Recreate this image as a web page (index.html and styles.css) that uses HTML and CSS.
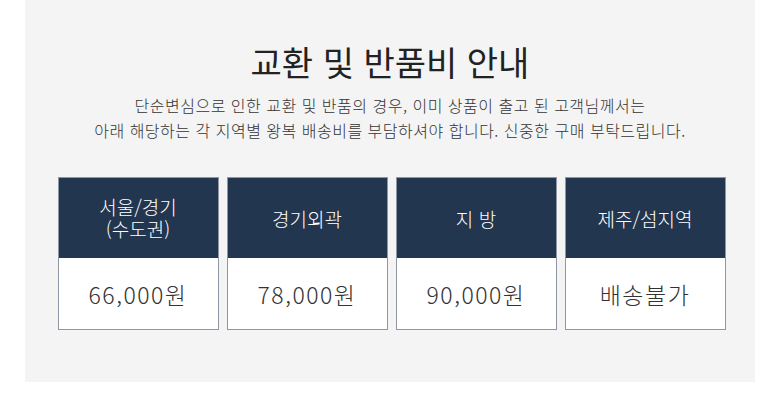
FILE: index.html
```html
<!DOCTYPE html>
<html lang="ko">
  <head>
    <meta charset="UTF-8" />
    <meta name="viewport" content="width=device-width, initial-scale=1.0" />
    <title>교환 및 반품비 안내</title>
    <link rel="stylesheet" href="styles.css">
  </head>
  <body>
    <div class="panel">
      <h1 class="title">교환 및 반품비 안내</h1>
      <p class="desc">
        단순변심으로 인한 교환 및 반품의 경우, 이미 상품이 출고 된 고객님께서는<br />
        아래 해당하는 각 지역별 왕복 배송비를 부담하셔야 합니다. 신중한 구매 부탁드립니다.
      </p>
      <div class="cards">
        <div class="card">
          <div class="cardHead">
            <span class="headLine">서울/경기</span>
            <span class="headLine">(수도권)</span>
          </div>
          <div class="cardBody">66,000원</div>
        </div>
        <div class="card">
          <div class="cardHead">경기외곽</div>
          <div class="cardBody">78,000원</div>
        </div>
        <div class="card">
          <div class="cardHead">지 방</div>
          <div class="cardBody">90,000원</div>
        </div>
        <div class="card">
          <div class="cardHead">제주/섬지역</div>
          <div class="cardBody">배송불가</div>
        </div>
      </div>
    </div>
  </body>
</html>
```

FILE: styles.css
```css
* {
  padding: 0;
  margin: 0;
  box-sizing: border-box;
  font-family: "Noto Sans CJK KR", "Noto Sans", sans-serif;
}
body {
  background-color: white;
}
.panel {
  margin: 0 25px;
  height: 382px;
  background-color: #f4f4f4;
  padding-top: 40px;
  text-align: center;
}
.title {
  font-size: 34px;
  line-height: 44px;
  font-weight: 400;
  color: #222;
}
.desc {
  margin-top: 9px;
  font-size: 16px;
  line-height: 25px;
  letter-spacing: 0.5px;
  font-weight: 300;
  color: #333;
}
.cards {
  display: flex;
  justify-content: center;
  gap: 8px;
  margin-top: 34px;
  padding-left: 3px;
}
.card {
  width: 161px;
  border: 1px solid #8e97a3;
  background-color: white;
}
.cardHead {
  height: 80px;
  display: flex;
  flex-direction: column;
  align-items: center;
  justify-content: center;
  background-color: #23364f;
  color: white;
  font-size: 19px;
  line-height: 23px;
  font-weight: 300;
}
.headLine {
  display: block;
  height: 22px;
  line-height: 22px;
}
.cardBody {
  height: 71px;
  display: flex;
  align-items: center;
  justify-content: center;
  font-size: 23px;
  letter-spacing: 1.5px;
  font-weight: 300;
  color: #333;
}
```
